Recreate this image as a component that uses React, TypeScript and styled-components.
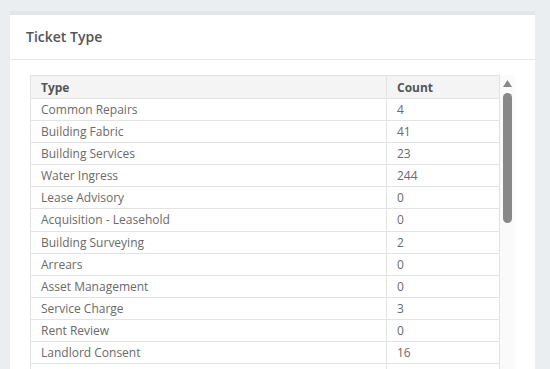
import React from "react";
import styled, { createGlobalStyle } from "styled-components";

const Global = createGlobalStyle`
  html, body { margin: 0; padding: 0; }
  body {
    background: #ebeef0;
    font-family: "Open Sans", "Liberation Sans", sans-serif;
    overflow: hidden;
  }
`;

const Page = styled.div`
  padding: 11px 15px 0 10px;
  height: 369px;
  box-sizing: border-box;
`;

const Card = styled.section`
  background: #fff;
  border-top: 4px solid #e2e6e9;
  height: 100%;
  display: flex;
  flex-direction: column;
`;

const CardHeader = styled.header`
  height: 44px;
  display: flex;
  align-items: center;
  padding: 0 16px;
  border-bottom: 1px solid #e7e7e7;
  flex-shrink: 0;
`;

const Title = styled.h3`
  margin: 0 0 2px 0;
  font-size: 14px;
  font-weight: 600;
  color: #555;
`;

const CardBody = styled.div`
  padding: 15px 20px 0 20px;
  flex: 1;
  min-height: 0;
  display: flex;
`;

const Scroller = styled.div`
  display: flex;
  flex: 1;
  min-height: 0;
  overflow: hidden;
`;

const TableWrap = styled.div`
  flex: 1;
  overflow: hidden;
`;

const Table = styled.table`
  width: 100%;
  border-collapse: collapse;
  table-layout: fixed;
  font-size: 12px;
  color: #6a6a6a;
  border: 1px solid #e3e3e3;
`;

const Th = styled.th<{ $w?: string }>`
  background: #f4f4f4;
  color: #555;
  font-weight: 700;
  text-align: left;
  height: 22px;
  padding: 0 10px;
  border: 1px solid #e3e3e3;
  width: ${(p) => p.$w ?? "auto"};
`;

const Td = styled.td`
  padding: 2px 10px;
  border: 1px solid #e3e3e3;
  line-height: 17.1px;
  white-space: nowrap;
`;

const Track = styled.div`
  width: 15px;
  flex-shrink: 0;
  background: #fafafa;
  display: flex;
  flex-direction: column;
  align-items: center;
  padding-top: 5px;
`;

const Arrow = styled.svg`
  width: 9px;
  height: 7px;
  display: block;
`;

const Thumb = styled.div`
  margin-top: 6px;
  width: 9px;
  height: 130px;
  border-radius: 5px;
  background: #888;
`;

const rows: [string, string][] = [
  ["Common Repairs", "4"],
  ["Building Fabric", "41"],
  ["Building Services", "23"],
  ["Water Ingress", "244"],
  ["Lease Advisory", "0"],
  ["Acquisition - Leasehold", "0"],
  ["Building Surveying", "2"],
  ["Arrears", "0"],
  ["Asset Management", "0"],
  ["Service Charge", "3"],
  ["Rent Review", "0"],
  ["Landlord Consent", "16"],
  ["\u00a0", "\u00a0"],
];

export default function App() {
  return (
    <>
      <Global />
      <Page>
        <Card>
          <CardHeader>
            <Title>Ticket Type</Title>
          </CardHeader>
          <CardBody>
            <Scroller>
              <TableWrap>
                <Table>
                  <thead>
                    <tr>
                      <Th>Type</Th>
                      <Th $w="92px">Count</Th>
                    </tr>
                  </thead>
                  <tbody>
                    {rows.map(([t, c], i) => (
                      <tr key={i}>
                        <Td>{t}</Td>
                        <Td>{c}</Td>
                      </tr>
                    ))}
                  </tbody>
                </Table>
              </TableWrap>
              <Track>
                <Arrow viewBox="0 0 9 7">
                  <path d="M4.5 0 L9 7 L0 7 Z" fill="#888" />
                </Arrow>
                <Thumb />
              </Track>
            </Scroller>
          </CardBody>
        </Card>
      </Page>
    </>
  );
}
